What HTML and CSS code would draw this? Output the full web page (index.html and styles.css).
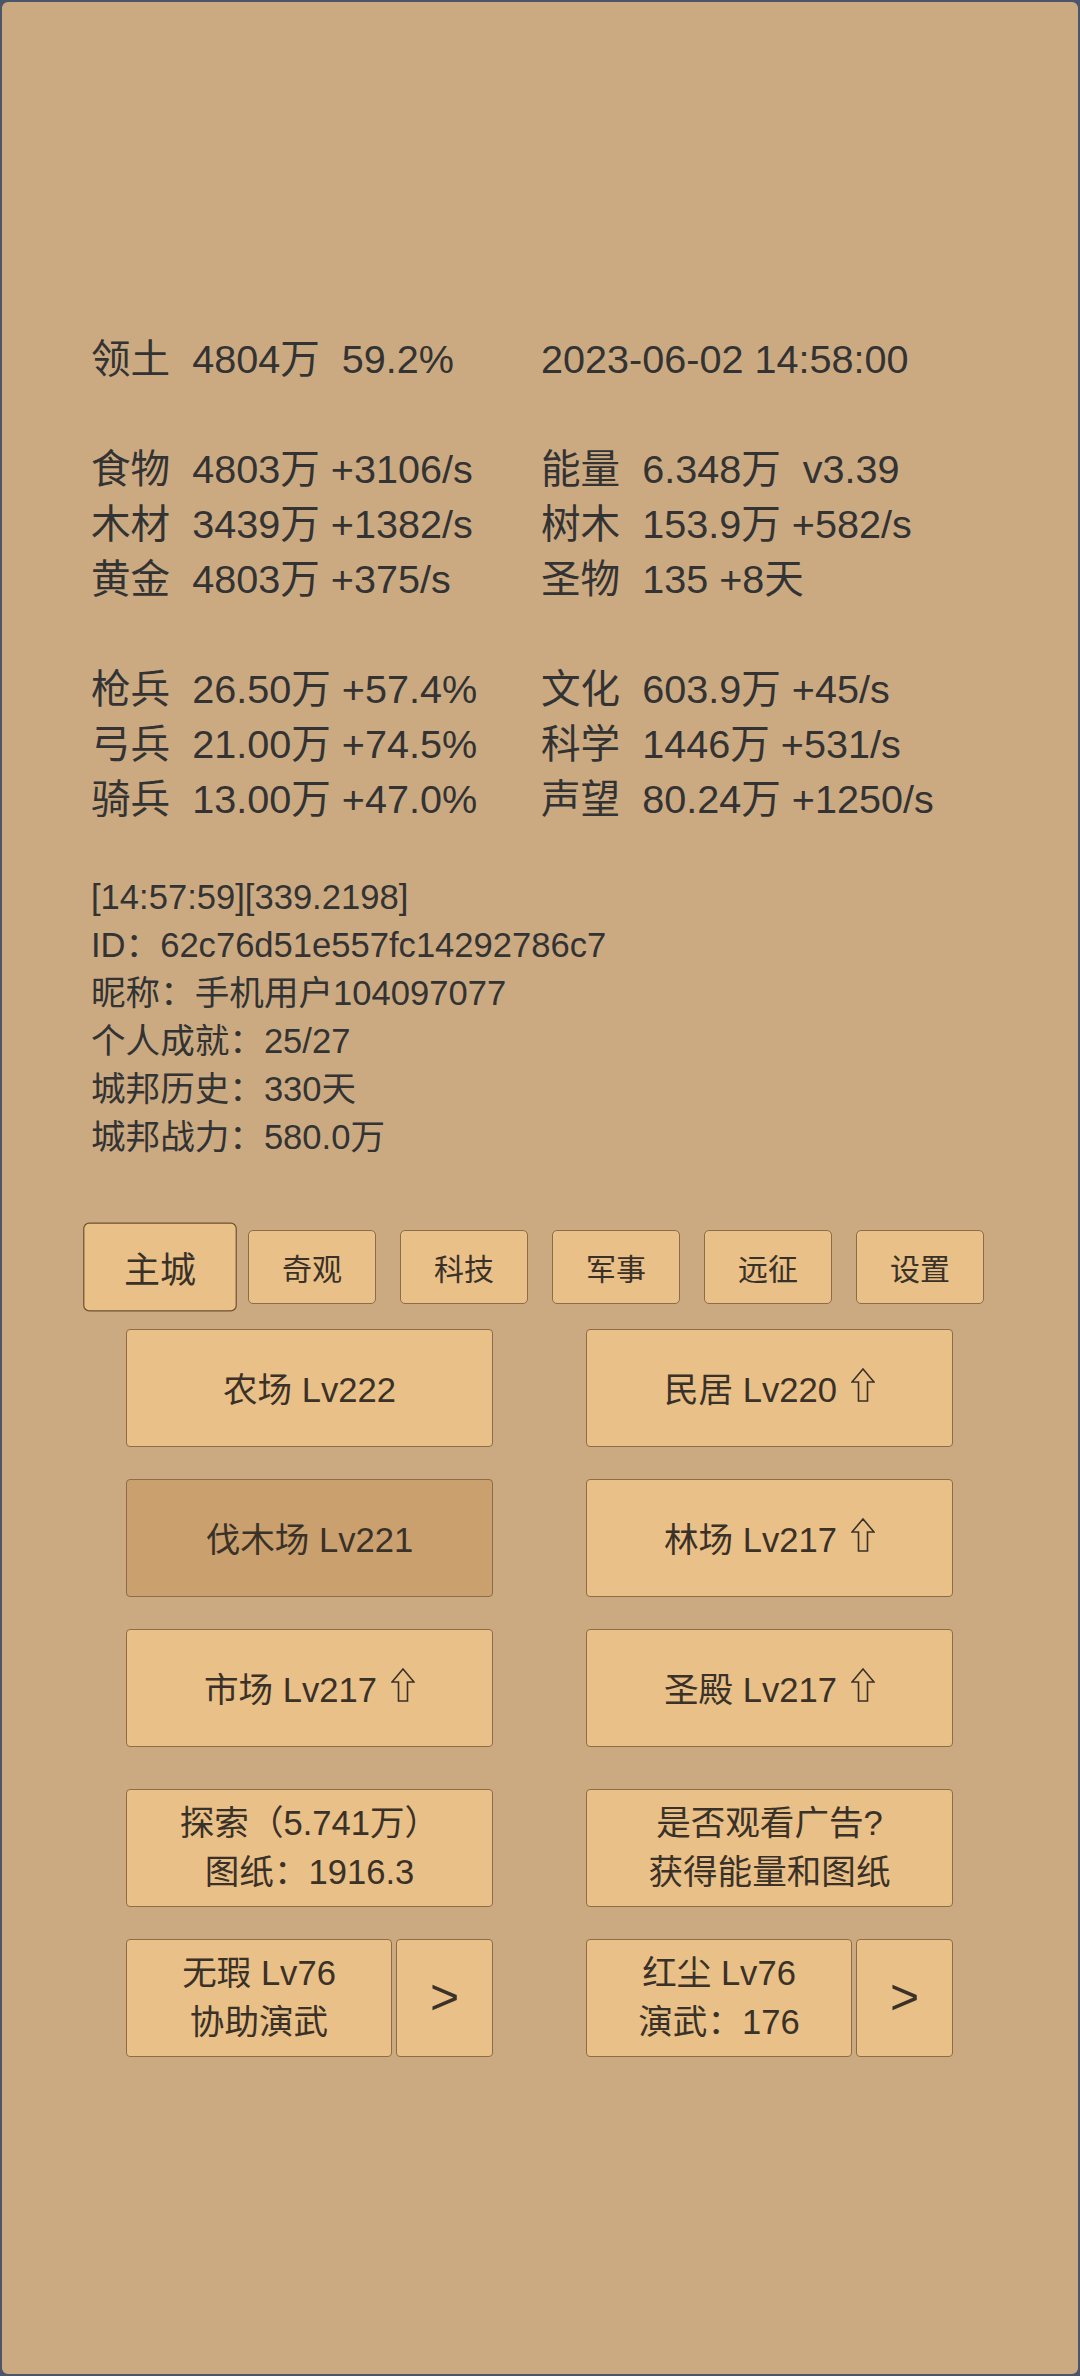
FILE: index.html
```html
<!DOCTYPE html>
<html lang="zh">
<head>
  <meta charset="UTF-8" />
  <meta name="viewport" content="width=device-width, initial-scale=1.0"/>
  <title>城邦</title>
  <link rel="stylesheet" href="styles.css">
</head>
<body>

  <div class="screen">

    <section class="stats">
      <div class="row"><span>领土  4804万  59.2%</span><span>2023-06-02 14:58:00</span></div>
      <div class="row"></div>
      <div class="row"><span>食物  4803万 +3106/s</span><span>能量  6.348万  v3.39</span></div>
      <div class="row"><span>木材  3439万 +1382/s</span><span>树木  153.9万 +582/s</span></div>
      <div class="row"><span>黄金  4803万 +375/s</span><span>圣物  135 +8天</span></div>
      <div class="row"></div>
      <div class="row"><span>枪兵  26.50万 +57.4%</span><span>文化  603.9万 +45/s</span></div>
      <div class="row"><span>弓兵  21.00万 +74.5%</span><span>科学  1446万 +531/s</span></div>
      <div class="row"><span>骑兵  13.00万 +47.0%</span><span>声望  80.24万 +1250/s</span></div>
    </section>

    <section class="log">
      <p>[14:57:59][339.2198]</p>
      <p>ID：62c76d51e557fc14292786c7</p>
      <p>昵称：手机用户104097077</p>
      <p>个人成就：25/27</p>
      <p>城邦历史：330天</p>
      <p>城邦战力：580.0万</p>
    </section>

    <nav class="tabs">
      <div class="tab active">主城</div>
      <div class="tab">奇观</div>
      <div class="tab">科技</div>
      <div class="tab">军事</div>
      <div class="tab">远征</div>
      <div class="tab">设置</div>
    </nav>

    <section class="buildings">
      <div class="btn">农场 Lv222</div>
      <div class="btn">民居 Lv220 <svg class="up" viewBox="0 0 24 34"><polygon points="12,1 23,14 16.5,14 16.5,33 7.5,33 7.5,14 1,14"/></svg></div>
      <div class="btn pressed">伐木场 Lv221</div>
      <div class="btn">林场 Lv217 <svg class="up" viewBox="0 0 24 34"><polygon points="12,1 23,14 16.5,14 16.5,33 7.5,33 7.5,14 1,14"/></svg></div>
      <div class="btn">市场 Lv217 <svg class="up" viewBox="0 0 24 34"><polygon points="12,1 23,14 16.5,14 16.5,33 7.5,33 7.5,14 1,14"/></svg></div>
      <div class="btn">圣殿 Lv217 <svg class="up" viewBox="0 0 24 34"><polygon points="12,1 23,14 16.5,14 16.5,33 7.5,33 7.5,14 1,14"/></svg></div>
    </section>

    <section class="actions">
      <div class="btn two-line">探索（5.741万）<br>图纸：1916.3</div>
      <div class="btn two-line">是否观看广告?<br>获得能量和图纸</div>
      <div class="pair">
        <div class="btn two-line">无瑕 Lv76<br>协助演武</div>
        <div class="btn next">&gt;</div>
      </div>
      <div class="pair">
        <div class="btn two-line">红尘 Lv76<br>演武：176</div>
        <div class="btn next">&gt;</div>
      </div>
    </section>

  </div>

</body>
</html>
```

FILE: styles.css
```css
:root {
  --bg-color: #cbaa82;
  --frame-color: #4b566b;
  --btn-color: #e9c087;
  --btn-pressed: #c9a06e;
  --btn-border: #8d6c47;
  --text-color: #333333;
  --btn-text: #3a3128;
}

* {
  box-sizing: border-box;
  margin: 0;
  padding: 0;
}

body {
  font-family: 'Liberation Sans', 'Noto Sans CJK SC', sans-serif;
  color: var(--text-color);
  background: var(--frame-color);
}

.screen {
  height: 2376px;
  border: 2px solid var(--frame-color);
  border-radius: 8px;
  background: var(--bg-color);
  padding-top: 330px;
  overflow: hidden;
}

/* resource table */
.stats {
  margin-left: 89px;
  font-size: 39.6px;
  line-height: 55px;
}

.stats .row {
  display: grid;
  grid-template-columns: 450px auto;
  height: 55px;
  white-space: pre;
}

.log {
  margin: 46px 0 0 89px;
  font-size: 34.6px;
  line-height: 48px;
}

/* tab bar */
.tabs {
  display: flex;
  gap: 24px;
  margin: 69px 0 0 94px;
}

.tab {
  width: 128px;
  height: 74px;
  display: flex;
  align-items: center;
  justify-content: center;
  background: var(--btn-color);
  border: 1px solid var(--btn-border);
  border-radius: 5px;
  font-size: 30px;
  color: var(--btn-text);
}

.tab.active {
  transform: scale(1.2);
  border-color: #6f5232;
}

/* buttons */
.buildings,
.actions {
  display: grid;
  grid-template-columns: 367px 367px;
  grid-auto-rows: 118px;
  column-gap: 93px;
  row-gap: 32px;
  margin-left: 124px;
}

.buildings {
  margin-top: 25px;
}

.actions {
  margin-top: 42px;
}

.btn {
  display: flex;
  align-items: center;
  justify-content: center;
  gap: 14px;
  padding-bottom: 3px;
  background: var(--btn-color);
  border: 1px solid var(--btn-border);
  border-radius: 4px;
  font-size: 34.6px;
  color: var(--btn-text);
  white-space: nowrap;
}

.btn.pressed {
  background: var(--btn-pressed);
}

.btn.two-line {
  display: block;
  padding: 9px 0 0;
  text-align: center;
  line-height: 49px;
}

.pair {
  display: flex;
  gap: 4px;
}

.pair .two-line {
  flex: 1;
}

.btn.next {
  width: 97px;
  font-size: 50px;
}

.up {
  width: 24px;
  height: 34px;
  margin-top: -4px;
}

.up polygon {
  fill: none;
  stroke: var(--btn-text);
  stroke-width: 1.6;
  stroke-linejoin: miter;
}
```
